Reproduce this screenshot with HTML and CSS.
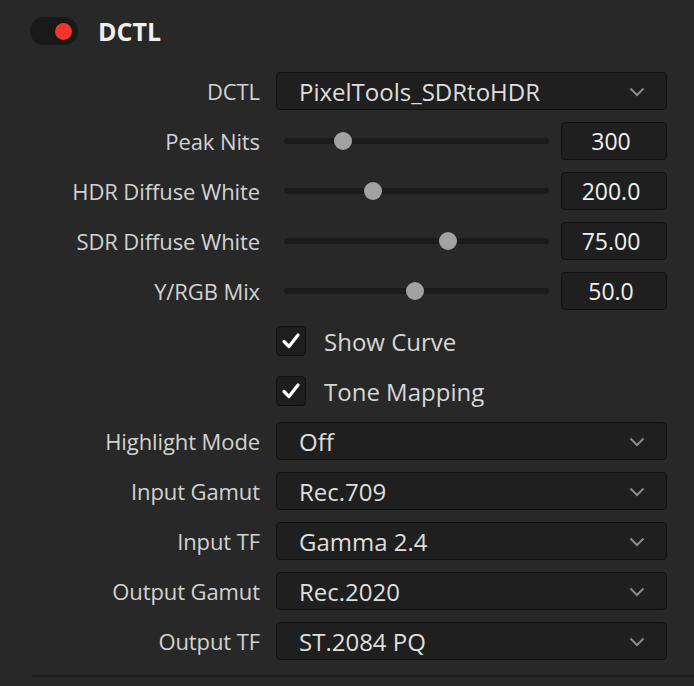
FILE: index.html
```html
<!DOCTYPE html>
<html lang="en">
<head>
    <meta charset="UTF-8">
    <meta name="viewport" content="width=device-width, initial-scale=1.0">
    <title>DCTL</title>
    <link rel="stylesheet" href="styles.css">
</head>
<body>
    <div class="panel">
        <div class="header">
            <div class="toggle"><span class="toggle-dot"></span></div>
            <h1>DCTL</h1>
        </div>

        <div class="form">
            <label class="label">DCTL</label>
            <div class="select">
                <span>PixelTools_SDRtoHDR</span>
                <svg class="chevron" width="16" height="10" viewBox="0 0 16 10"><path d="M1.5 1.5 L8 8 L14.5 1.5" fill="none" stroke="#8a8a8a" stroke-width="2"/></svg>
            </div>

            <label class="label">Peak Nits</label>
            <div class="slider-row">
                <div class="slider"><div class="track"></div><div class="knob" style="left: 22.3%"></div></div>
                <div class="value">300</div>
            </div>

            <label class="label">HDR Diffuse White</label>
            <div class="slider-row">
                <div class="slider"><div class="track"></div><div class="knob" style="left: 33.7%"></div></div>
                <div class="value">200.0</div>
            </div>

            <label class="label">SDR Diffuse White</label>
            <div class="slider-row">
                <div class="slider"><div class="track"></div><div class="knob" style="left: 61.7%"></div></div>
                <div class="value">75.00</div>
            </div>

            <label class="label">Y/RGB Mix</label>
            <div class="slider-row">
                <div class="slider"><div class="track"></div><div class="knob" style="left: 49.6%"></div></div>
                <div class="value">50.0</div>
            </div>

            <span class="label"></span>
            <div class="check">
                <span class="box"><svg width="20" height="18" viewBox="0 0 20 18"><path d="M3 9.5 L8 14.5 L17 3" fill="none" stroke="#fff" stroke-width="3.2" stroke-linecap="round" stroke-linejoin="round"/></svg></span>
                <span>Show Curve</span>
            </div>

            <span class="label"></span>
            <div class="check">
                <span class="box"><svg width="20" height="18" viewBox="0 0 20 18"><path d="M3 9.5 L8 14.5 L17 3" fill="none" stroke="#fff" stroke-width="3.2" stroke-linecap="round" stroke-linejoin="round"/></svg></span>
                <span>Tone Mapping</span>
            </div>

            <label class="label">Highlight Mode</label>
            <div class="select">
                <span>Off</span>
                <svg class="chevron" width="16" height="10" viewBox="0 0 16 10"><path d="M1.5 1.5 L8 8 L14.5 1.5" fill="none" stroke="#8a8a8a" stroke-width="2"/></svg>
            </div>

            <label class="label">Input Gamut</label>
            <div class="select">
                <span>Rec.709</span>
                <svg class="chevron" width="16" height="10" viewBox="0 0 16 10"><path d="M1.5 1.5 L8 8 L14.5 1.5" fill="none" stroke="#8a8a8a" stroke-width="2"/></svg>
            </div>

            <label class="label">Input TF</label>
            <div class="select">
                <span>Gamma 2.4</span>
                <svg class="chevron" width="16" height="10" viewBox="0 0 16 10"><path d="M1.5 1.5 L8 8 L14.5 1.5" fill="none" stroke="#8a8a8a" stroke-width="2"/></svg>
            </div>

            <label class="label">Output Gamut</label>
            <div class="select">
                <span>Rec.2020</span>
                <svg class="chevron" width="16" height="10" viewBox="0 0 16 10"><path d="M1.5 1.5 L8 8 L14.5 1.5" fill="none" stroke="#8a8a8a" stroke-width="2"/></svg>
            </div>

            <label class="label">Output TF</label>
            <div class="select">
                <span>ST.2084 PQ</span>
                <svg class="chevron" width="16" height="10" viewBox="0 0 16 10"><path d="M1.5 1.5 L8 8 L14.5 1.5" fill="none" stroke="#8a8a8a" stroke-width="2"/></svg>
            </div>
        </div>

        <div class="divider"></div>
    </div>
</body>
</html>
```

FILE: styles.css
```css
body {
    margin: 0;
    background: #282828;
    font-family: "Open Sans", "Noto Sans", sans-serif;
    color: #d6d6d6;
}

.panel {
    width: 694px;
    height: 686px;
    overflow: hidden;
}

.header {
    display: flex;
    align-items: center;
    height: 62px;
    padding-left: 30px;
}

.toggle {
    width: 48px;
    height: 28px;
    border-radius: 14px;
    background: #191919;
    display: flex;
    align-items: center;
    justify-content: flex-end;
    padding-right: 6px;
    box-sizing: border-box;
}

.toggle-dot {
    width: 17px;
    height: 17px;
    border-radius: 50%;
    background: #f5332e;
}

h1 {
    margin: 0 0 0 20px;
    font-size: 25px;
    font-weight: 700;
    color: #efefef;
}

.form {
    display: grid;
    grid-template-columns: 260px 391px;
    grid-auto-rows: 50px;
    column-gap: 16px;
    align-items: center;
    margin-top: 4px;
}

.label {
    text-align: right;
    font-size: 22px;
    letter-spacing: -0.1px;
    color: #d2d2d2;
}

.select {
    height: 38px;
    box-sizing: border-box;
    background: #1f1f1f;
    border: 1px solid #111;
    border-radius: 4px;
    display: flex;
    align-items: center;
    justify-content: space-between;
    padding: 0 21px 0 22px;
    font-size: 24px;
    color: #dedede;
}

.chevron {
    margin-top: 2px;
}

.slider-row {
    display: flex;
    align-items: center;
    gap: 12px;
}

.slider {
    position: relative;
    flex: 1;
    height: 20px;
    margin-left: 8px;
}

.track {
    position: absolute;
    left: 0;
    right: 0;
    top: 7px;
    height: 6px;
    border-radius: 3px;
    background: #1b1b1b;
}

.knob {
    position: absolute;
    top: 1px;
    width: 18px;
    height: 18px;
    margin-left: -9px;
    border-radius: 50%;
    background: #a2a2a2;
}

.value {
    width: 106px;
    height: 38px;
    box-sizing: border-box;
    background: #1f1f1f;
    border: 1px solid #111;
    border-radius: 4px;
    display: flex;
    align-items: center;
    justify-content: center;
    padding-right: 6px;
    font-size: 23px;
    color: #efefef;
}

.check {
    display: flex;
    align-items: center;
    gap: 18px;
    font-size: 24px;
    color: #d6d6d6;
}

.box {
    width: 30px;
    height: 30px;
    box-sizing: border-box;
    background: #1e1e1e;
    border: 1px solid #111;
    border-radius: 4px;
    display: flex;
    align-items: center;
    justify-content: center;
}

.divider {
    height: 2px;
    background: #1d1d1d;
    margin: 9px 0 0 32px;
}
```
